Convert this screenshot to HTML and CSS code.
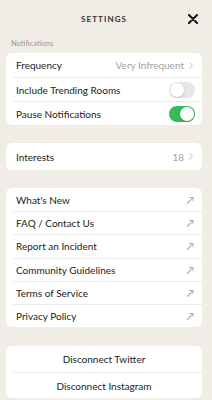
FILE: index.html
```html
<!DOCTYPE html>
<html>
<head>
<meta charset="utf-8">
<link rel="stylesheet" href="styles.css">
</head>
<body>
<div class="page">
  <header class="header">
    <span class="title">SETTINGS</span>
    <span class="close">
      <svg width="10" height="10" viewBox="0 0 10 10"><path d="M1 1L9 9M9 1L1 9" stroke="#1a1a1a" stroke-width="2.1" stroke-linecap="round"/></svg>
    </span>
  </header>
  <div class="section-label">Notifications</div>
  <div class="card card-notif">
    <div class="row"><span>Frequency</span><span class="value">Very Infrequent <svg class="chev" width="4" height="7" viewBox="0 0 4 7"><path d="M0.5 0.5L3.5 3.5L0.5 6.5" fill="none" stroke="#b8b8b8" stroke-width="0.9"/></svg></span></div>
    <div class="row"><span>Include Trending Rooms</span><span class="toggle"></span></div>
    <div class="row"><span>Pause Notifications</span><span class="toggle on"></span></div>
  </div>
  <div class="card card-interests">
    <div class="row"><span>Interests</span><span class="value">18 <svg class="chev" width="4" height="7" viewBox="0 0 4 7"><path d="M0.5 0.5L3.5 3.5L0.5 6.5" fill="none" stroke="#b8b8b8" stroke-width="0.9"/></svg></span></div>
  </div>
  <div class="card card-links">
    <div class="row"><span>What's New</span><span class="arrow">&#8599;</span></div>
    <div class="row"><span>FAQ / Contact Us</span><span class="arrow">&#8599;</span></div>
    <div class="row"><span>Report an Incident</span><span class="arrow">&#8599;</span></div>
    <div class="row"><span>Community Guidelines</span><span class="arrow">&#8599;</span></div>
    <div class="row"><span>Terms of Service</span><span class="arrow">&#8599;</span></div>
    <div class="row"><span>Privacy Policy</span><span class="arrow">&#8599;</span></div>
  </div>
  <div class="card card-disc">
    <div class="row center"><span>Disconnect Twitter</span></div>
    <div class="row center"><span>Disconnect Instagram</span></div>
  </div>
</div>
</body>
</html>
```
FILE: styles.css
```css
html, body {
  margin: 0;
  padding: 0;
  background: #efede6;
}
body {
  font-family: Lato, "Open Sans", sans-serif;
  color: #222;
  width: 212px;
  height: 400px;
  overflow: hidden;
}
.page {
  padding: 0 10px 0 6px;
  display: flex;
  flex-direction: column;
}
.header {
  height: 38px;
  position: relative;
  display: flex;
  align-items: center;
  justify-content: center;
}
.title {
  font-size: 8px;
  font-weight: 700;
  letter-spacing: 1.1px;
  color: #333;
}
.close {
  position: absolute;
  right: 4px;
  top: 14px;
  display: flex;
}
.section-label {
  font-size: 7.5px;
  color: #9a9890;
  padding-left: 5px;
  height: 15px;
  line-height: 12px;
}
.card {
  background: #fff;
  border-radius: 6px;
  display: flex;
  flex-direction: column;
  margin-bottom: 18px;
}
.row {
  box-sizing: border-box;
  display: flex;
  align-items: center;
  justify-content: space-between;
  margin-left: 7px;
  padding: 0 7px 0 3px;
  font-size: 10px;
  border-top: 1px solid #ebebeb;
}
.row:first-child {
  border-top: none;
}
.card-notif .row { height: 24px; }
.card-interests .row { height: 27px; }
.card-links .row { height: 23.2px; }
.card-disc { margin-top: 1px; }
.card-disc .row { height: 26px; }
.row.center {
  justify-content: center;
  padding: 0 7px 0 0;
}
.value {
  color: #a3a3a3;
  font-size: 10px;
  display: flex;
  align-items: center;
}
.chev {
  margin-left: 5px;
  margin-right: 2px;
}
.arrow {
  color: #9a9a9a;
  font-size: 10px;
  margin-right: 1px;
}
.toggle {
  width: 26px;
  height: 16px;
  border-radius: 8px;
  background: #e6e6e9;
  position: relative;
}
.toggle::after {
  content: "";
  position: absolute;
  left: 1px;
  top: 1px;
  width: 14px;
  height: 14px;
  border-radius: 50%;
  background: #fff;
  box-shadow: 0 1px 2px rgba(0,0,0,0.2);
}
.toggle.on {
  background: #36bb57;
}
.toggle.on::after {
  left: 11px;
}
```
